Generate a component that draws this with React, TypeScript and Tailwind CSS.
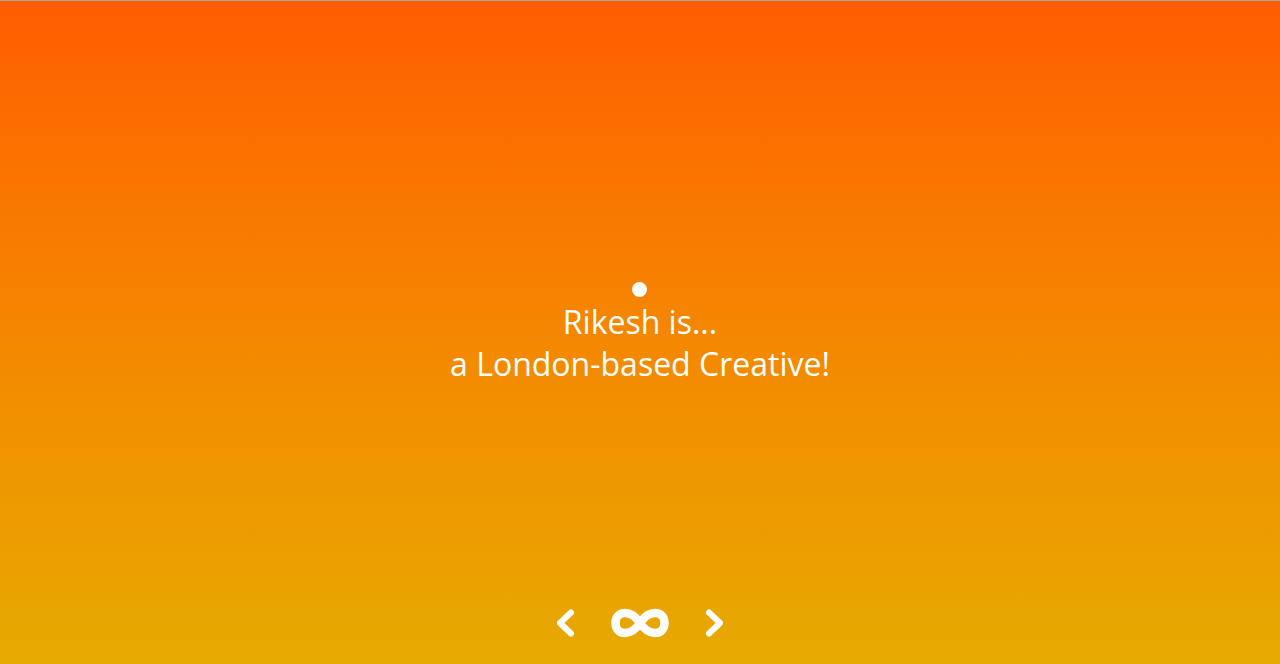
export default function App() {
  return (
    <div className="h-[664px] w-full border-t border-[#a8a8a8] bg-gradient-to-b from-[#ff5c00] to-[#e6aa00] flex flex-col items-center text-white" style={{ fontFamily: '"Open Sans", "Noto Sans", sans-serif' }}>
      {/* ── Centre copy ── */}
      <div className="flex-1 flex flex-col items-center pt-[281px]">
        <div className="w-[15px] h-[15px] rounded-full bg-white" />
        <h1 className="mt-[4px] text-[32px] leading-[42px] text-center font-medium">
          Rikesh is...
          <br />
          a London-based Creative!
        </h1>
      </div>

      {/* ── Controls ── */}
      <div className="flex items-center gap-[34px] mb-[26px]">
        <button aria-label="Previous">
          <svg width="22" height="30" viewBox="0 0 22 30" fill="none" stroke="white" strokeWidth="6" strokeLinecap="round" strokeLinejoin="round">
            <path d="M16 4.5 L5 15 L16 25.5" />
          </svg>
        </button>
        <button aria-label="Loop">
          <svg width="58" height="30" viewBox="0 0 58 30" fill="none" stroke="white" strokeWidth="8.5">
            <path d="M29 15 C25 9 20 5 14 5 C8 5 4.5 9.5 4.5 15 C4.5 20.5 8 25 14 25 C20 25 25 21 29 15 C33 9 38 5 44 5 C50 5 53.5 9.5 53.5 15 C53.5 20.5 50 25 44 25 C38 25 33 21 29 15 Z" />
          </svg>
        </button>
        <button aria-label="Next">
          <svg width="22" height="30" viewBox="0 0 22 30" fill="none" stroke="white" strokeWidth="6" strokeLinecap="round" strokeLinejoin="round">
            <path d="M6 4.5 L17 15 L6 25.5" />
          </svg>
        </button>
      </div>
    </div>
  );
}
